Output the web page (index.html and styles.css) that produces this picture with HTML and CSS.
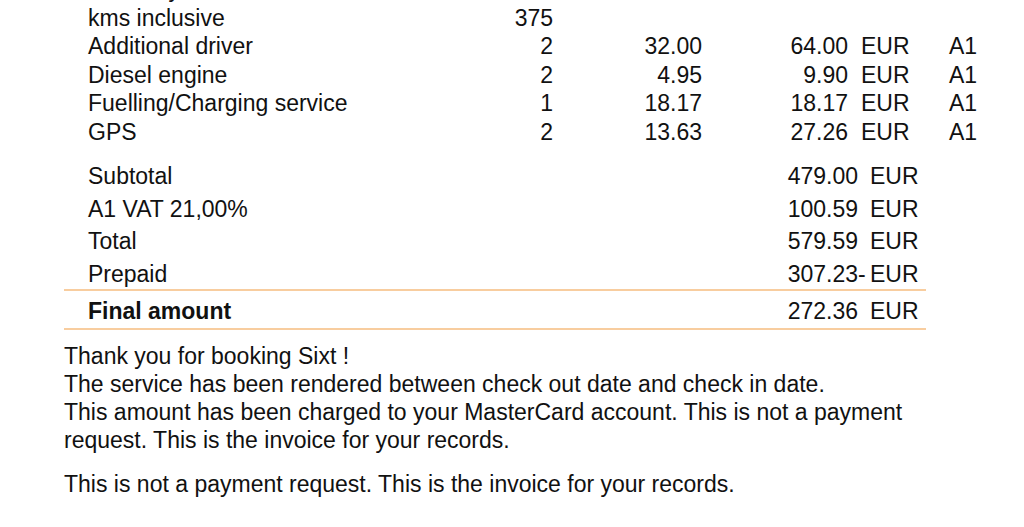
FILE: index.html
```html
<!DOCTYPE html>
<html lang="en">
<head>
<meta charset="utf-8">
<title>Invoice</title>
<link rel="stylesheet" href="styles.css">
</head>
<body>
<div class="page">
  <div class="items">
    <div class="row"><span class="desc">Rate/day</span><span class="qty"></span><span class="price"></span><span class="amt"></span><span class="cur"></span><span class="tax"></span></div>
    <div class="row"><span class="desc">kms inclusive</span><span class="qty">375</span><span class="price"></span><span class="amt"></span><span class="cur"></span><span class="tax"></span></div>
    <div class="row"><span class="desc">Additional driver</span><span class="qty">2</span><span class="price">32.00</span><span class="amt">64.00</span><span class="cur">EUR</span><span class="tax">A1</span></div>
    <div class="row"><span class="desc">Diesel engine</span><span class="qty">2</span><span class="price">4.95</span><span class="amt">9.90</span><span class="cur">EUR</span><span class="tax">A1</span></div>
    <div class="row"><span class="desc">Fuelling/Charging service</span><span class="qty">1</span><span class="price">18.17</span><span class="amt">18.17</span><span class="cur">EUR</span><span class="tax">A1</span></div>
    <div class="row"><span class="desc">GPS</span><span class="qty">2</span><span class="price">13.63</span><span class="amt">27.26</span><span class="cur">EUR</span><span class="tax">A1</span></div>
  </div>

  <div class="summary">
    <div class="srow"><span class="label">Subtotal</span><span class="sum">479.00<span class="sign"></span></span><span class="scur">EUR</span></div>
    <div class="srow"><span class="label">A1 VAT 21,00%</span><span class="sum">100.59<span class="sign"></span></span><span class="scur">EUR</span></div>
    <div class="srow"><span class="label">Total</span><span class="sum">579.59<span class="sign"></span></span><span class="scur">EUR</span></div>
    <div class="srow"><span class="label">Prepaid</span><span class="sum">307.23<span class="sign">-</span></span><span class="scur">EUR</span></div>
    <div class="srow final"><span class="label strong">Final amount</span><span class="sum">272.36<span class="sign"></span></span><span class="scur">EUR</span></div>
  </div>

  <p class="note">Thank you for booking Sixt !<br>The service has been rendered between check out date and check in date.<br>This amount has been charged to your MasterCard account. This is not a payment request. This is the invoice for your records.</p>
  <p class="note second">This is not a payment request. This is the invoice for your records.</p>
</div>
</body>
</html>
```

FILE: styles.css
```css
html, body {
  margin: 0;
  padding: 0;
  background: #ffffff;
}

body {
  font-family: "Liberation Sans", Arial, Helvetica, sans-serif;
  font-size: 23px;
  color: #111111;
  overflow: hidden;
}

.page {
  width: 862px;
  margin-left: 64px;
}

.items {
  margin-top: -25px;
  padding-left: 24px;
}

.row {
  display: grid;
  grid-template-columns: 405px 60px 149px 146px 101px 60px;
  line-height: 28.5px;
  height: 28.5px;
  white-space: nowrap;
}

.qty, .price, .amt {
  text-align: right;
}

.cur {
  padding-left: 13px;
}

.summary {
  margin-top: 13px;
}

.srow {
  display: grid;
  grid-template-columns: 1fr 178px 60px;
  line-height: 34.5px;
  height: 32.5px;
  white-space: nowrap;
}

.label {
  padding-left: 24px;
}

.strong {
  font-weight: bold;
}

.sum {
  text-align: right;
}

.sign {
  display: inline-block;
  width: 8px;
  text-align: left;
}

.scur {
  padding-left: 4px;
}

.srow.final {
  border-top: 2px solid #f8cd9f;
  border-bottom: 2px solid #f8cd9f;
  height: 37px;
  line-height: 40px;
}

.note {
  margin: 12px 0 0 0;
  line-height: 28px;
}

.note.second {
  margin-top: 16px;
}
```
